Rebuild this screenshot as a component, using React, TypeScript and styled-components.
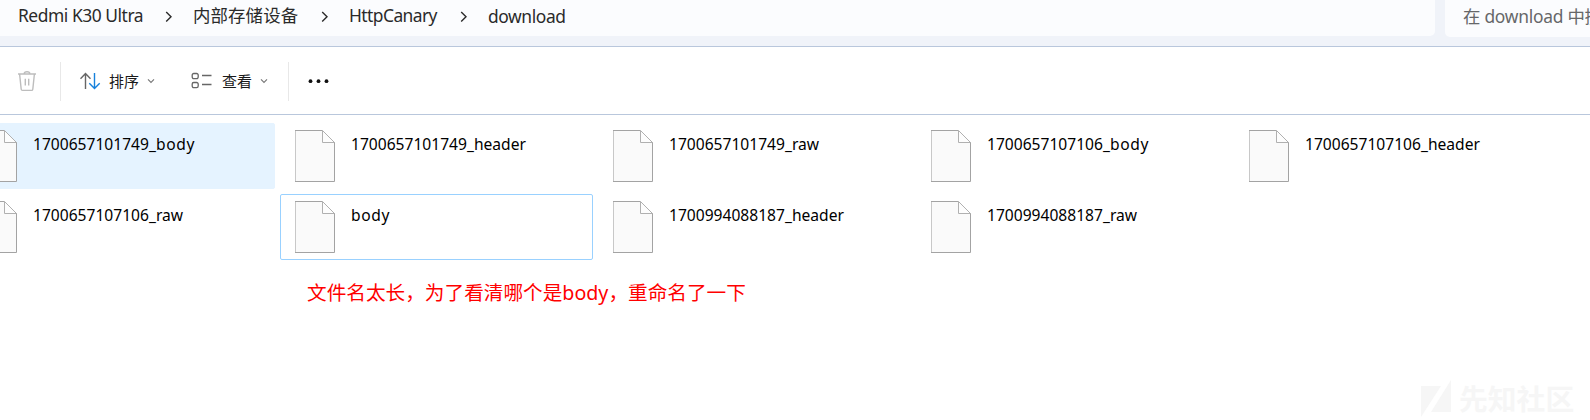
import React from "react";
import styled, { createGlobalStyle } from "styled-components";

const GlobalStyle = createGlobalStyle`
  * { box-sizing: border-box; }
  html, body { margin: 0; padding: 0; }
  body {
    width: 1590px;
    height: 420px;
    overflow: hidden;
    background: #fff;
    font-family: "Noto Sans", "Noto Sans CJK SC", sans-serif;
  }
`;

const Window = styled.div`
  position: relative;
  display: flex;
  flex-direction: column;
  width: 1590px;
  height: 420px;
  overflow: hidden;
  background: #fff;
`;

const NavBar = styled.header`
  display: flex;
  gap: 10px;
  align-items: flex-start;
  height: 47px;
  background: #f0f3f9;
  border-bottom: 1px solid #b9c7dc;
`;

const AddressBar = styled.nav`
  display: flex;
  width: 1435px;
  height: 36px;
  padding-left: 18px;
  background: #fbfcfe;
  border-bottom-right-radius: 5px;
`;

const Crumb = styled.span<{ $width: number; $spacing?: number; $drop?: number }>`
  flex: none;
  width: ${(p) => p.$width}px;
  padding-top: ${(p) => p.$drop ?? 0}px;
  font-size: 17.4px;
  line-height: 31px;
  letter-spacing: ${(p) => p.$spacing ?? 0}px;
  white-space: nowrap;
  color: #2a2a2a;
`;

const CrumbArrow = styled.svg`
  flex: none;
  width: 8px;
  height: 12px;
  margin: 11px 20px 0 0;
`;

const SearchBox = styled.div`
  flex: 1;
  height: 37px;
  padding-left: 18px;
  overflow: hidden;
  background: #fbfcfe;
  border-bottom-left-radius: 5px;
  font-size: 17.4px;
  line-height: 33px;
  letter-spacing: -0.25px;
  white-space: nowrap;
  color: #666769;
`;

const Toolbar = styled.div`
  display: flex;
  align-items: center;
  height: 68px;
  padding: 0 0 0 17px;
  border-bottom: 1px solid #b9c7dc;
`;

const Divider = styled.span<{ $before: number; $after: number }>`
  width: 1px;
  height: 39px;
  margin: 1px ${(p) => p.$after}px 0 ${(p) => p.$before}px;
  background: #e8e8e8;
`;

const ToolButton = styled.div<{ $width: number }>`
  display: flex;
  align-items: center;
  width: ${(p) => p.$width}px;
  font-size: 15px;
  line-height: 20px;
  color: #1a1a1a;
`;

const ToolLabel = styled.span<{ $before: number }>`
  margin: 0 8px 0 ${(p) => p.$before}px;
`;

const FileGrid = styled.main`
  display: grid;
  grid-template-columns: repeat(5, 313px);
  grid-auto-rows: 66px;
  gap: 5px;
  margin: 8px 0 0 -38px;
`;

const FileTile = styled.div<{ $state?: "hover" | "focus" }>`
  display: flex;
  border: 1px solid
    ${(p) => (p.$state === "focus" ? "#99d1ff" : p.$state === "hover" ? "#e5f3ff" : "transparent")};
  border-radius: 2px;
  background: ${(p) => (p.$state === "hover" ? "#e5f3ff" : "transparent")};
  padding: 5px 0 0 13px;
`;

const FileName = styled.span`
  margin: 4px 0 0 15px;
  font-size: 15.6px;
  line-height: 22px;
  white-space: nowrap;
  color: #000;
`;

const BodySuffix = styled.span`
  letter-spacing: 0.65px;
`;

const Note = styled.p`
  margin: 19px 0 0 307px;
  font-size: 19.65px;
  line-height: 28px;
  white-space: nowrap;
  color: #ff0000;
`;

const Watermark = styled.div`
  position: absolute;
  left: 1421px;
  top: 380px;
  display: flex;
  align-items: center;
  gap: 7px;
  height: 38px;
  font-size: 28.8px;
  font-weight: 700;
  line-height: 38px;
  white-space: nowrap;
  color: #f6f6f6;
`;

const Arrow = () => (
  <CrumbArrow viewBox="0 0 8 12" fill="none" stroke="#2b2b2b" strokeWidth="1.4">
    <path d="M1.2 1 6 5.7 1.2 10.4" />
  </CrumbArrow>
);

const Chevron = () => (
  <svg width="8" height="6" viewBox="0 0 8 6" fill="none" stroke="#777" strokeWidth="1.1">
    <path d="M1 1.3 4 4.5 7 1.3" />
  </svg>
);

const TrashIcon = () => (
  <svg width="20" height="22" viewBox="0 0 20 22" fill="none" stroke="#bdbdbd" strokeWidth="1.4">
    <path d="M1 4h18M7.2 3.8C7.2 1 12.8 1 12.8 3.8M2.6 4l1.6 15.2q.1 1.2 1.3 1.2h9q1.2 0 1.3-1.2L17.4 4M8.3 8.8v6.6M11.7 8.8v6.6" />
  </svg>
);

const SortIcon = () => (
  <svg width="21" height="18" viewBox="0 0 21 18" fill="none" strokeWidth="1.4">
    <path stroke="#666" d="M5.5 17V1.5M.5 6.8l5-5.3 5 5.3" />
    <path stroke="#1681dc" d="M14.5 1v15.5M9.3 11.2l5.2 5.3 5.2-5.3" />
  </svg>
);

const ViewIcon = () => (
  <svg width="21" height="18" viewBox="0 0 21 18" fill="none" stroke="#666" strokeWidth="1.3">
    <rect x="1.2" y="1.5" width="6" height="5.2" rx="1.6" />
    <rect x="1.2" y="10.5" width="6" height="5.2" rx="1.6" />
    <path d="M11 3.5h9.5M11 12.5h9.5" />
  </svg>
);

const MoreIcon = () => (
  <svg width="22" height="6" viewBox="0 0 22 6" fill="#111">
    <circle cx="2.5" cy="3.2" r="1.9" />
    <circle cx="10.5" cy="3.2" r="1.9" />
    <circle cx="18.5" cy="3.2" r="1.9" />
  </svg>
);

const PageIcon = () => (
  <svg width="42" height="54" viewBox="0 0 42 54">
    <path d="M1.5 1.5H28.5L40.5 13.5V52.5H1.5Z" fill="#fafafa" />
    <path d="M1.5 1V52.5" stroke="#c8c8c8" fill="none" />
    <path d="M1 1.5H28.5M40.5 13V52.5H1" stroke="#a3a3a3" fill="none" />
    <path d="M28.5 1.5V13.5H40.5Z" fill="#fdfdfd" stroke="#b0b0b0" />
  </svg>
);

const files: { stem: string; suffix: string; state?: "hover" | "focus" }[] = [
  { stem: "1700657101749_", suffix: "body", state: "hover" },
  { stem: "1700657101749_", suffix: "header" },
  { stem: "1700657101749_", suffix: "raw" },
  { stem: "1700657107106_", suffix: "body" },
  { stem: "1700657107106_", suffix: "header" },
  { stem: "1700657107106_", suffix: "raw" },
  { stem: "", suffix: "body", state: "focus" },
  { stem: "1700994088187_", suffix: "header" },
  { stem: "1700994088187_", suffix: "raw" },
];

export default function App() {
  return (
    <Window>
      <GlobalStyle />
      <NavBar>
        <AddressBar>
          <Crumb $width={147} $spacing={-0.45}>Redmi K30 Ultra</Crumb>
          <Arrow />
          <Crumb $width={128} $spacing={0.15}>内部存储设备</Crumb>
          <Arrow />
          <Crumb $width={111} $spacing={-0.55}>HttpCanary</Crumb>
          <Arrow />
          <Crumb $width={90} $spacing={-0.4} $drop={1}>download</Crumb>
        </AddressBar>
        <SearchBox>在 download 中搜</SearchBox>
      </NavBar>
      <Toolbar>
        <TrashIcon />
        <Divider $before={23} $after={19} />
        <ToolButton $width={111}>
          <SortIcon />
          <ToolLabel $before={8}>排序</ToolLabel>
          <Chevron />
        </ToolButton>
        <ToolButton $width={97}>
          <ViewIcon />
          <ToolLabel $before={10}>查看</ToolLabel>
          <Chevron />
        </ToolButton>
        <Divider $before={0} $after={19} />
        <MoreIcon />
      </Toolbar>
      <FileGrid>
        {files.map((file) => (
          <FileTile key={file.stem + file.suffix} $state={file.state}>
            <PageIcon />
            <FileName>
              {file.stem}
              {file.suffix === "body" ? <BodySuffix>body</BodySuffix> : file.suffix}
            </FileName>
          </FileTile>
        ))}
      </FileGrid>
      <Note>文件名太长，为了看清哪个是body，重命名了一下</Note>
      <Watermark>
        <svg width="31" height="38" viewBox="0 0 31 38" fill="#f6f6f6">
          <path d="M0 6H20L0 37ZM30 0V32H10Z" />
        </svg>
        <span>先知社区</span>
      </Watermark>
    </Window>
  );
}
